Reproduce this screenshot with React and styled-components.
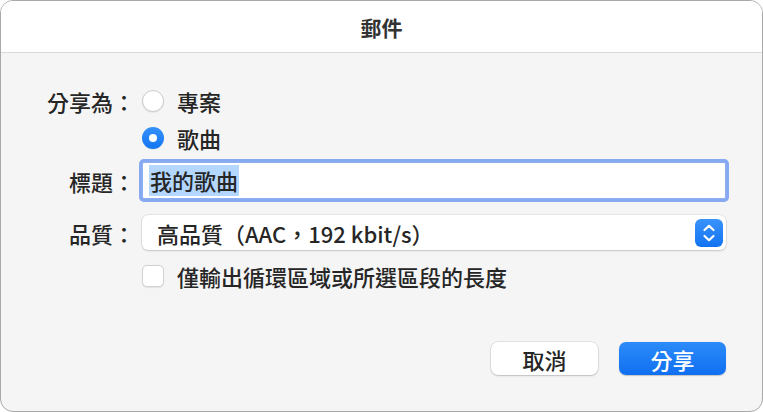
import React from "react";
import styled, { createGlobalStyle } from "styled-components";

const Global = createGlobalStyle`
  html, body { margin: 0; padding: 0; background: #ffffff; }
  body { font-family: "Noto Sans CJK TC", "Noto Sans", sans-serif; }
  * { box-sizing: border-box; }
`;

const Dialog = styled.div`
  width: 763px;
  height: 412px;
  border: 1px solid #a9a9a9;
  border-radius: 13px;
  background: #f5f5f5;
  overflow: hidden;
  display: flex;
  flex-direction: column;
  color: #262626;
  font-weight: 500;
`;

const Header = styled.div`
  height: 52px;
  flex: none;
  background: #ffffff;
  border-bottom: 1px solid #d9d9d9;
  display: flex;
  align-items: center;
  justify-content: center;
  font-size: 21px;
  font-weight: 700;
  color: #333;
  padding-top: 1px;
`;

const Form = styled.div`
  display: grid;
  grid-template-columns: 134px 1fr;
  column-gap: 7px;
  padding: 35px 36px 0 0;
`;

const Label = styled.div`
  grid-column: 1;
  font-size: 22px;
  text-align: right;
  align-self: center;
  line-height: 1;
  margin-top: ${(p) => p.$mt || 0}px;
`;

const Cell = styled.div`
  grid-column: 2;
  display: flex;
  align-items: center;
  margin-top: ${(p) => p.$mt || 0}px;
  height: ${(p) => p.$h}px;
`;

const Option = styled.div`
  display: flex;
  align-items: center;
  gap: 13px;
  font-size: 22px;
  line-height: 1;
`;

const Radio = styled.span`
  width: 22px;
  height: 22px;
  border-radius: 50%;
  flex: none;
  display: flex;
  align-items: center;
  justify-content: center;
  background: ${(p) => (p.$on ? "linear-gradient(#3590fa, #1276f3)" : "#ffffff")};
  border: ${(p) => (p.$on ? "none" : "1px solid #cfcfcf")};
  box-shadow: 0 0.5px 1px rgba(0, 0, 0, 0.12);
  &::after {
    content: "";
    display: ${(p) => (p.$on ? "block" : "none")};
    width: 8px;
    height: 8px;
    border-radius: 50%;
    background: #fff;
  }
`;

const Field = styled.div`
  flex: 1;
  height: 37px;
  background: #fff;
  border: 1px solid #8fb0ee;
  box-shadow: 0 0 0 3px #86a9f2;
  border-radius: 2px;
  display: flex;
  align-items: center;
  padding-left: 6px;
  font-size: 22px;
`;

const Selected = styled.span`
  background: #b3d7ff;
  padding: 2px 1px;
  line-height: 1.2;
`;

const Popup = styled.div`
  flex: 1;
  height: 35px;
  background: #fff;
  border-radius: 6px;
  box-shadow: 0 0 0 0.5px rgba(0, 0, 0, 0.12), 0 1px 2px rgba(0, 0, 0, 0.15);
  display: flex;
  align-items: center;
  justify-content: space-between;
  padding: 0 3px 0 15px;
  font-size: 22px;
`;

const Stepper = styled.span`
  width: 28px;
  height: 28px;
  border-radius: 6px;
  background: linear-gradient(#3a93fb, #1273f2);
  display: flex;
  align-items: center;
  justify-content: center;
`;

const Check = styled.span`
  width: 22px;
  height: 22px;
  border-radius: 5px;
  background: #fff;
  border: 1px solid #d2d2d2;
  box-shadow: 0 0.5px 1px rgba(0, 0, 0, 0.08);
  flex: none;
`;

const Footer = styled.div`
  display: flex;
  justify-content: flex-end;
  gap: 21px;
  padding: 53px 36px 0 0;
`;

const Button = styled.button`
  width: 107px;
  height: 33px;
  border-radius: 7px;
  font-family: inherit;
  font-weight: 500;
  font-size: 22px;
  line-height: 1;
  display: flex;
  align-items: center;
  justify-content: center;
  padding: 0;
  border: none;
  color: ${(p) => (p.$primary ? "#ffffff" : "#262626")};
  background: ${(p) => (p.$primary ? "linear-gradient(#2b8bf9, #106ff0)" : "#ffffff")};
  box-shadow: ${(p) =>
    p.$primary
      ? "0 0.5px 1px rgba(0,0,0,0.2)"
      : "0 0 0 0.5px rgba(0,0,0,0.14), 0 1px 2px rgba(0,0,0,0.16)"};
`;

export default function App() {
  return (
    <>
      <Global />
      <Dialog>
        <Header>郵件</Header>
        <Form>
          <Label>分享為：</Label>
          <Cell $h={26}>
            <Option>
              <Radio />
              專案
            </Option>
          </Cell>
          <Cell $h={26} $mt={11}>
            <Option>
              <Radio $on />
              歌曲
            </Option>
          </Cell>
          <Label $mt={11}>標題：</Label>
          <Cell $h={37} $mt={11}>
            <Field>
              <Selected>我的歌曲</Selected>
            </Field>
          </Cell>
          <Label $mt={16}>品質：</Label>
          <Cell $h={35} $mt={16}>
            <Popup>
              <span>高品質（AAC，192 kbit/s）</span>
              <Stepper>
                <svg width="14" height="20" viewBox="0 0 14 20" fill="none" stroke="#fff" strokeWidth="2.2" strokeLinecap="round" strokeLinejoin="round">
                  <path d="M2.5 7 L7 2.8 L11.5 7" />
                  <path d="M2.5 13 L7 17.2 L11.5 13" />
                </svg>
              </Stepper>
            </Popup>
          </Cell>
          <Cell $h={26} $mt={13}>
            <Option>
              <Check />
              僅輸出循環區域或所選區段的長度
            </Option>
          </Cell>
        </Form>
        <Footer>
          <Button>取消</Button>
          <Button $primary>分享</Button>
        </Footer>
      </Dialog>
    </>
  );
}
